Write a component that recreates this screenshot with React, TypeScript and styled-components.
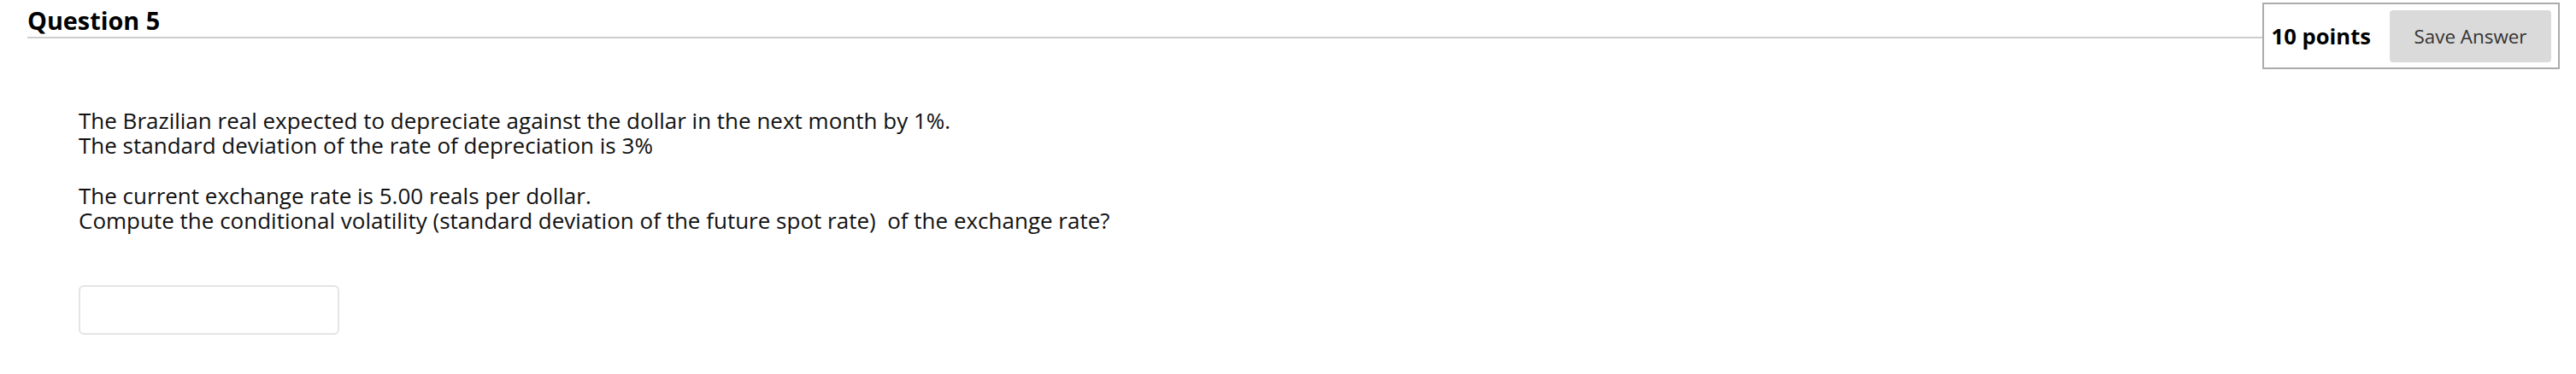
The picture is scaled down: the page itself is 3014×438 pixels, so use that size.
import React from "react";
import styled, { createGlobalStyle } from "styled-components";

const GlobalStyle = createGlobalStyle`
  html, body {
    margin: 0;
    padding: 0;
    background: #ffffff;
  }
  body {
    font-family: "Open Sans", "Noto Sans", sans-serif;
    color: #111111;
  }
`;

const Page = styled.div`
  width: 3014px;
  min-height: 438px;
  background: #ffffff;
`;

const Header = styled.div`
  display: flex;
  align-items: flex-start;
  padding: 0 19px 0 32px;
`;

const Title = styled.h2`
  flex: 1;
  margin: 10px 0 0;
  padding: 0 0 5px;
  font-family: "Open Sans", sans-serif;
  font-weight: 700;
  font-size: 28.8px;
  line-height: 28px;
  color: #000000;
  border-bottom: 2px solid #cdcdcd;
`;

const PointsBox = styled.div`
  margin-top: 3px;
  display: flex;
  align-items: center;
  gap: 22px;
  padding: 7px 8px 6px 7px;
  border: 2px solid #ababab;
  background: #ffffff;
`;

const Points = styled.span`
  font-family: "Open Sans", sans-serif;
  font-weight: 700;
  font-size: 25.6px;
  color: #000000;
  padding-left: 2px;
`;

const SaveButton = styled.button`
  width: 189px;
  height: 61px;
  border: none;
  border-radius: 4px;
  background: #dadada;
  color: #333333;
  font-family: "Open Sans", sans-serif;
  font-size: 22.4px;
  font-weight: 400;
  padding: 0;
  cursor: pointer;
`;

const Body = styled.div`
  margin-top: 46px;
  padding-left: 92px;
  display: flex;
  flex-direction: column;
  align-items: flex-start;
`;

const Paragraph = styled.p`
  margin: 0 0 30px;
  font-family: "Open Sans", sans-serif;
  font-size: 26px;
  line-height: 29px;
  color: #111111;
`;

const AnswerInput = styled.input`
  margin-top: 31px;
  width: 305px;
  height: 58px;
  box-sizing: border-box;
  border: 2px solid #e4e4e4;
  border-radius: 6px;
  background: #ffffff;
  outline: none;
`;

export default function App() {
  return (
    <Page>
      <GlobalStyle />
      <Header>
        <Title>Question 5</Title>
        <PointsBox>
          <Points>10 points</Points>
          <SaveButton>Save Answer</SaveButton>
        </PointsBox>
      </Header>
      <Body>
        <Paragraph>
          The Brazilian real expected to depreciate against the dollar in the next month by 1%.
          <br />
          The standard deviation of the rate of depreciation is 3%
        </Paragraph>
        <Paragraph>
          The current exchange rate is 5.00 reals per dollar.
          <br />
          Compute the conditional volatility (standard deviation of the future spot rate)&nbsp; of the exchange rate?
        </Paragraph>
        <AnswerInput type="text" aria-label="Answer" />
      </Body>
    </Page>
  );
}
